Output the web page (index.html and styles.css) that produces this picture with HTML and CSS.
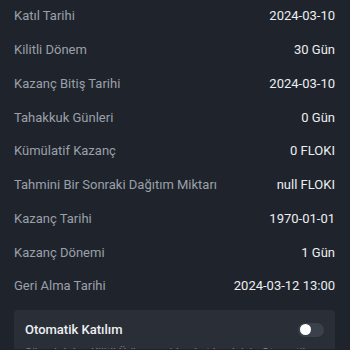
FILE: index.html
```html
<!DOCTYPE html>
<html lang="tr">
<head>
<meta charset="utf-8">
<link rel="stylesheet" href="styles.css">
</head>
<body>
<div class="page">
  <div class="list">
    <div class="row"><span class="label">Katıl Tarihi</span><span class="value">2024-03-10</span></div>
    <div class="row"><span class="label">Kilitli Dönem</span><span class="value">30 Gün</span></div>
    <div class="row"><span class="label">Kazanç Bitiş Tarihi</span><span class="value">2024-03-10</span></div>
    <div class="row"><span class="label">Tahakkuk Günleri</span><span class="value">0 Gün</span></div>
    <div class="row"><span class="label">Kümülatif Kazanç</span><span class="value">0 FLOKI</span></div>
    <div class="row"><span class="label">Tahmini Bir Sonraki Dağıtım Miktarı</span><span class="value">null FLOKI</span></div>
    <div class="row"><span class="label">Kazanç Tarihi</span><span class="value">1970-01-01</span></div>
    <div class="row"><span class="label">Kazanç Dönemi</span><span class="value">1 Gün</span></div>
    <div class="row"><span class="label">Geri Alma Tarihi</span><span class="value">2024-03-12 13:00</span></div>
  </div>
  <div class="card">
    <div class="card-head">
      <span class="card-title">Otomatik Katılım</span>
      <span class="toggle"><span class="knob"></span></span>
    </div>
    <p class="card-desc">Süresi dolan Kilitli Ürüne yeniden katılmak için Otomatik Katılım'ı etkinleştirin.</p>
  </div>
</div>
</body>
</html>
```
FILE: styles.css
```css
html, body {
  margin: 0;
  padding: 0;
  background: #1f242c;
  overflow: hidden;
}
.page {
  width: 350px;
  height: 350px;
  padding: 0 15px 0 14px;
  box-sizing: border-box;
  font-family: Roboto, "Noto Sans", sans-serif;
  margin-top: -1px;
}
.list {
  display: flex;
  flex-direction: column;
}
.row {
  height: 33.75px;
  display: flex;
  align-items: center;
  justify-content: space-between;
  font-size: 13px;
}
.label {
  color: #9aa0a9;
}
.value {
  color: #eceef1;
}
.card {
  margin-top: 7px;
  background: #2a2f37;
  border-radius: 4px;
  padding: 11px 11px 12px 11px;
}
.card-head {
  display: flex;
  align-items: center;
  justify-content: space-between;
  height: 18px;
}
.card-title {
  color: #eef0f2;
  font-size: 13px;
  font-weight: 500;
}
.toggle {
  width: 26px;
  height: 14px;
  border-radius: 7px;
  background: #3b414b;
  display: flex;
  align-items: center;
  padding-left: 2px;
  box-sizing: border-box;
}
.knob {
  width: 11px;
  height: 11px;
  border-radius: 50%;
  background: #ffffff;
}
.card-desc {
  margin: 6px 0 0;
  color: #7d838c;
  font-size: 11.5px;
  line-height: 15px;
}
```
